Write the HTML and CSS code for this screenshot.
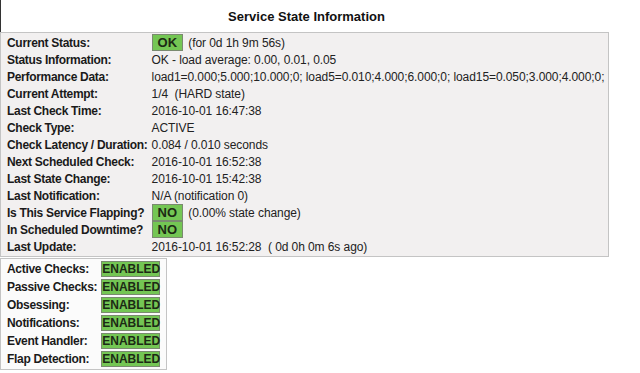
FILE: index.html
```html
<!doctype html>
<html lang="en">
    <head>
        <meta charset="UTF-8" />
        <title>Service State Information</title>
        <link rel="stylesheet" href="styles.css">
    </head>
    <body>
        <div class="page-title">Service State Information</div>
        <table class="info-box">
            <tr>
                <td class="label">Current Status:</td>
                <td><span class="badge">OK</span> (for 0d 1h 9m 56s)</td>
            </tr>
            <tr>
                <td class="label">Status Information:</td>
                <td>OK - load average: 0.00, 0.01, 0.05</td>
            </tr>
            <tr>
                <td class="label">Performance Data:</td>
                <td>load1=0.000;5.000;10.000;0; load5=0.010;4.000;6.000;0; load15=0.050;3.000;4.000;0;</td>
            </tr>
            <tr>
                <td class="label">Current Attempt:</td>
                <td>1/4 &nbsp;(HARD state)</td>
            </tr>
            <tr>
                <td class="label">Last Check Time:</td>
                <td>2016-10-01 16:47:38</td>
            </tr>
            <tr>
                <td class="label">Check Type:</td>
                <td>ACTIVE</td>
            </tr>
            <tr>
                <td class="label">Check Latency / Duration:</td>
                <td>0.084&nbsp;/&nbsp;0.010 seconds</td>
            </tr>
            <tr>
                <td class="label">Next Scheduled Check:</td>
                <td>2016-10-01 16:52:38</td>
            </tr>
            <tr>
                <td class="label">Last State Change:</td>
                <td>2016-10-01 15:42:38</td>
            </tr>
            <tr>
                <td class="label">Last Notification:</td>
                <td>N/A (notification 0)</td>
            </tr>
            <tr>
                <td class="label">Is This Service Flapping?</td>
                <td><span class="badge">NO</span> (0.00% state change)</td>
            </tr>
            <tr>
                <td class="label">In Scheduled Downtime?</td>
                <td><span class="badge">NO</span></td>
            </tr>
            <tr>
                <td class="label">Last Update:</td>
                <td>2016-10-01 16:52:28&nbsp; ( 0d 0h 0m 6s ago)</td>
            </tr>
        </table>
        <table class="info-box checks">
            <tr><td class="label">Active Checks:</td><td><span class="badge wide">ENABLED</span></td></tr>
            <tr><td class="label">Passive Checks:</td><td><span class="badge wide">ENABLED</span></td></tr>
            <tr><td class="label">Obsessing:</td><td><span class="badge wide">ENABLED</span></td></tr>
            <tr><td class="label">Notifications:</td><td><span class="badge wide">ENABLED</span></td></tr>
            <tr><td class="label">Event Handler:</td><td><span class="badge wide">ENABLED</span></td></tr>
            <tr><td class="label">Flap Detection:</td><td><span class="badge wide">ENABLED</span></td></tr>
        </table>
    </body>
</html>
```

FILE: styles.css
```css
body {
    font-family: "Liberation Sans", Arial, sans-serif;
    font-size: 12px;
    color: #222;
    background: #fff;
    margin: 0;
    padding: 0;
}

.page-title {
    width: 612px;
    height: 32px;
    line-height: 34px;
    text-align: center;
    font-size: 13px;
    font-weight: bold;
    color: #111;
    border-left: 1px solid #333;
    box-sizing: border-box;
}

.info-box {
    border-collapse: separate;
    border-spacing: 0;
    background: #f2f0f0;
    border: 1px solid #c4c4c4;
    padding: 1px 2px 1px 4px;
}

.info-box td {
    padding: 0 2px;
    height: 17px;
    white-space: nowrap;
    vertical-align: middle;
    letter-spacing: -0.08px;
}

.info-box .label {
    font-weight: bold;
    color: #1a1a1a;
    padding-right: 2px;
    letter-spacing: -0.3px;
}

.badge {
    display: inline-block;
    background: #74c654;
    border: 1px solid #7a8a70;
    font-weight: bold;
    color: #1c2a14;
    font-size: 13px;
    padding: 0 5px;
    line-height: 15px;
    margin-right: 2px;
    letter-spacing: 0;
}

.checks {
    background: #fbfbfb;
    margin-top: 1px;
}

.checks td {
    height: 18px;
}

.badge.wide {
    width: 57px;
    padding: 0;
    text-align: center;
    font-size: 12px;
    line-height: 14px;
}
```
